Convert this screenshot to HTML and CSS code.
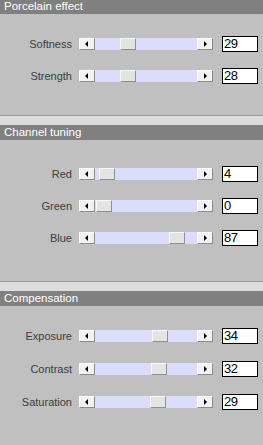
FILE: index.html
```html
<!DOCTYPE html>
<html>
<head>
<meta charset="utf-8">
<link rel="stylesheet" href="styles.css">
</head>
<body>
<div class="panel p1">
  <div class="head first">Porcelain effect</div>
  <div class="rows">
    <div class="row"><span class="lbl">Softness</span><div class="slider"><span class="btn l"></span><span class="track"><span class="thumb" style="left:25px"></span></span><span class="btn r"></span></div><span class="val">29</span></div>
    <div class="row"><span class="lbl">Strength</span><div class="slider"><span class="btn l"></span><span class="track"><span class="thumb" style="left:25px"></span></span><span class="btn r"></span></div><span class="val">28</span></div>
  </div>
</div>
<div class="sep"></div>
<div class="panel p2">
  <div class="head">Channel tuning</div>
  <div class="rows">
    <div class="row"><span class="lbl">Red</span><div class="slider"><span class="btn l"></span><span class="track"><span class="thumb" style="left:4px"></span></span><span class="btn r"></span></div><span class="val">4</span></div>
    <div class="row"><span class="lbl">Green</span><div class="slider"><span class="btn l"></span><span class="track"><span class="thumb" style="left:1px"></span></span><span class="btn r"></span></div><span class="val">0</span></div>
    <div class="row"><span class="lbl">Blue</span><div class="slider"><span class="btn l"></span><span class="track"><span class="thumb" style="left:74px"></span></span><span class="btn r"></span></div><span class="val">87</span></div>
  </div>
</div>
<div class="sep"></div>
<div class="panel p3">
  <div class="head">Compensation</div>
  <div class="rows">
    <div class="row"><span class="lbl">Exposure</span><div class="slider"><span class="btn l"></span><span class="track"><span class="thumb" style="left:57px"></span></span><span class="btn r"></span></div><span class="val">34</span></div>
    <div class="row"><span class="lbl">Contrast</span><div class="slider"><span class="btn l"></span><span class="track"><span class="thumb" style="left:56px"></span></span><span class="btn r"></span></div><span class="val">32</span></div>
    <div class="row"><span class="lbl">Saturation</span><div class="slider"><span class="btn l"></span><span class="track"><span class="thumb" style="left:55px"></span></span><span class="btn r"></span></div><span class="val">29</span></div>
  </div>
</div>
</body>
</html>
```
FILE: styles.css
```css
html, body {
  margin: 0;
  padding: 0;
  background: #c0c0c0;
  width: 263px;
  height: 445px;
  overflow: hidden;
  font-family: "Liberation Sans", Arial, sans-serif;
}
.panel {
  display: flex;
  flex-direction: column;
}
.p1, .p2 {
  border-bottom: 1px solid #9a9a9a;
}
.sep {
  height: 9px;
  background: #dcdcdc;
}
.head {
  height: 15px;
  line-height: 15px;
  background: #808080;
  color: #fff;
  font-size: 11.5px;
  padding-left: 4px;
}
.head.first {
  height: 14px;
  line-height: 13px;
}
.rows {
  display: flex;
  flex-direction: column;
}
.p1 .rows { padding: 22px 0 31px; gap: 16px; }
.p2 .rows { padding: 26px 0 35px; gap: 16px; }
.p3 .rows { padding: 22px 0 0; gap: 17px; }
.row {
  display: flex;
  align-items: center;
  height: 16px;
}
.lbl {
  width: 72px;
  margin-right: 7px;
  text-align: right;
  font-size: 11px;
  color: #3c3c3c;
}
.slider {
  display: flex;
  height: 12px;
}
.btn {
  box-sizing: border-box;
  width: 16px;
  height: 12px;
  background: #f2f2f2;
  border-top: 1px solid #fff;
  border-left: 1px solid #fff;
  border-right: 1px solid #8a8a8a;
  border-bottom: 1px solid #8a8a8a;
  display: flex;
  align-items: center;
  justify-content: center;
}
.btn::before {
  content: "";
  width: 0;
  height: 0;
  border-top: 3px solid transparent;
  border-bottom: 3px solid transparent;
}
.btn.l::before {
  border-right: 3px solid #000;
  margin-left: -2px;
}
.btn.r::before {
  border-left: 3px solid #000;
  margin-left: 1px;
}
.track {
  position: relative;
  width: 102px;
  height: 12px;
  background: #dcdcfc;
}
.thumb {
  position: absolute;
  top: 0;
  box-sizing: border-box;
  width: 16px;
  height: 12px;
  background: #e4e4e4;
  border-top: 1px solid #fafafa;
  border-left: 1px solid #fafafa;
  border-right: 1px solid #909090;
  border-bottom: 1px solid #909090;
}
.val {
  box-sizing: border-box;
  margin-left: 9px;
  width: 36px;
  height: 16px;
  border: 1px solid #000;
  background: #fff;
  color: #000;
  font-size: 13px;
  line-height: 14px;
  padding-left: 1px;
  letter-spacing: -0.5px;
}
```
